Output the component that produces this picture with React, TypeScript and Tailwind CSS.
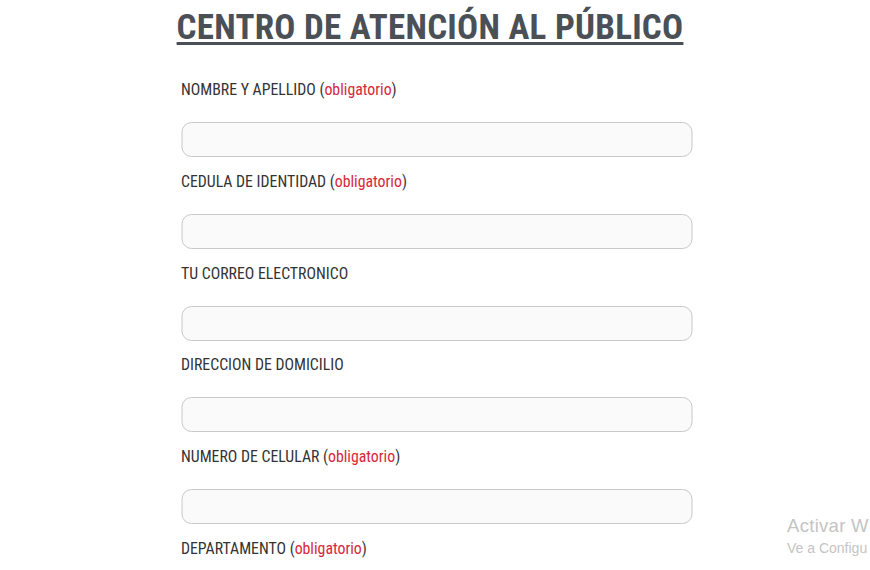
const fields = [
  { label: 'NOMBRE Y APELLIDO', required: true },
  { label: 'CEDULA DE IDENTIDAD', required: true },
  { label: 'TU CORREO ELECTRONICO', required: false },
  { label: 'DIRECCION DE DOMICILIO', required: false },
  { label: 'NUMERO DE CELULAR', required: true },
  { label: 'DEPARTAMENTO', required: true },
]

export default function App() {
  return (
    <div className="relative w-full h-[570px] overflow-hidden bg-white font-['Roboto_Condensed','Liberation_Sans_Narrow','DejaVu_Sans_Condensed',Roboto,sans-serif]">
      <h1 className="pt-[7px] pr-[10px] text-center text-[35px] leading-[42px] font-bold tracking-[0.25px] text-[#4b4f56] underline decoration-[3px] underline-offset-[3px]">
        CENTRO DE ATENCIÓN AL PÚBLICO
      </h1>

      <form className="mx-auto mt-[31px] w-[511px] translate-x-[1.5px]">
        {fields.map((f) => (
          <div key={f.label} className="mb-[14.8px]">
            <label className="block h-[20px] text-[15.8px] leading-[20px] text-[#333]">
              {f.label}
              {f.required && (
                <>
                  {' '}
                  (<span className="text-[#d6283a]">obligatorio</span>)
                </>
              )}
            </label>
            <input
              type="text"
              className="mt-[22px] block h-[35px] w-full rounded-[10px] border border-[#c8c8c8] bg-[#fafafa] px-3 outline-none"
            />
          </div>
        ))}
      </form>

      {/* windows activation watermark, clipped by the screen edge */}
      <div className="absolute left-[787px] top-[514px] whitespace-nowrap font-['Liberation_Sans',Arial,sans-serif] text-[#c4c4c4]">
        <div className="text-[18.5px] leading-[23px] tracking-[0.3px]">Activar W</div>
        <div className="text-[14px] leading-[22px]">Ve a Configu</div>
      </div>
    </div>
  )
}
